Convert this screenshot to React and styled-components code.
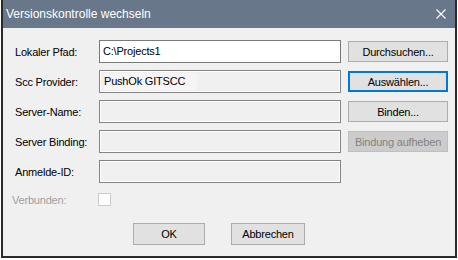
import React from "react";
import styled, { createGlobalStyle } from "styled-components";

const GlobalStyle = createGlobalStyle`
  html, body { margin: 0; padding: 0; background: #ffffff; }
  body { font-family: "Liberation Sans", Arial, sans-serif; }
  * { box-sizing: border-box; }
`;

const Window = styled.div`
  margin-left: 1px;
  width: 456px;
  height: 258px;
  border: 2px solid #2a2a2a;
  border-top: none;
  background: #f0f0f0;
  display: flex;
  flex-direction: column;
`;

const TitleBar = styled.div`
  height: 28px;
  flex: none;
  background: #687789;
  color: #ffffff;
  font-size: 12px;
  display: flex;
  align-items: center;
  justify-content: space-between;
  padding: 0 9px 1px 3px;
`;

const CloseIcon = styled.svg`
  width: 10px;
  height: 10px;
  display: block;
`;

const Body = styled.div`
  padding: 12px 7px 0 12px;
  display: flex;
  flex-direction: column;
  font-size: 11px;
  letter-spacing: -0.2px;
  color: #000;
`;

const Grid = styled.div`
  display: grid;
  grid-template-columns: 77px 242px 100px;
  grid-auto-rows: 23px;
  column-gap: 7px;
  row-gap: 7px;
  align-items: center;
`;

const Label = styled.div`
  grid-column: 1;
  color: ${(p) => (p.$disabled ? "#a0a0a0" : "#000")};
  white-space: nowrap;
`;

const Field = styled.div`
  grid-column: 2;
  height: 23px;
  display: flex;
  align-items: center;
  padding-left: ${(p) => (p.$editable ? "3px" : "4px")};
  border: 1px solid ${(p) => (p.$editable ? "#7a7a7a" : "#848484")};
  background: ${(p) => (p.$editable ? "#ffffff" : "#f0f0f0")};
  box-shadow: ${(p) => (p.$editable ? "none" : "inset 0 0 0 1px #ffffff")};
  white-space: nowrap;
`;

const FieldText = styled.span`
  background: ${(p) => (p.$tinted ? "#f7f4f7" : "transparent")};
  padding-right: ${(p) => (p.$tinted ? "12px" : "0")};
  line-height: 17px;
`;

const Button = styled.div`
  height: ${(p) => (p.$h || 21)}px;
  width: ${(p) => (p.$w ? `${p.$w}px` : "auto")};
  display: flex;
  align-items: center;
  justify-content: center;
  white-space: nowrap;
  background: ${(p) => (p.$disabled ? "#cccccc" : "#e1e1e1")};
  color: ${(p) => (p.$disabled ? "#838383" : "#000")};
  border: ${(p) =>
    p.$focused ? "2px solid #0078d7" : p.$disabled ? "1px solid #bfbfbf" : "1px solid #adadad"};
`;

const SideButton = styled(Button)`
  grid-column: 3;
`;

const CheckRow = styled.div`
  margin-top: 10px;
  height: 13px;
  display: flex;
  align-items: center;
`;

const CheckLabel = styled.div`
  width: 86px;
  margin-left: -3px;
  color: #a0a0a0;
`;

const CheckBox = styled.div`
  width: 13px;
  height: 13px;
  border: 1px solid #cccccc;
  background: #ffffff;
`;

const Footer = styled.div`
  margin-top: 17px;
  padding-left: 118px;
  display: flex;
  gap: 26px;
`;

export default function App() {
  return (
    <>
      <GlobalStyle />
      <Window>
        <TitleBar>
          <span>Versionskontrolle wechseln</span>
          <CloseIcon viewBox="0 0 10 10">
            <path d="M0.5 0.5 L9.5 9.5 M9.5 0.5 L0.5 9.5" stroke="#ffffff" strokeWidth="1.1" fill="none" />
          </CloseIcon>
        </TitleBar>
        <Body>
          <Grid>
            <Label>Lokaler Pfad:</Label>
            <Field $editable>
              <FieldText>C:\Projects1</FieldText>
            </Field>
            <SideButton>Durchsuchen...</SideButton>

            <Label>Scc Provider:</Label>
            <Field>
              <FieldText $tinted>PushOk GITSCC</FieldText>
            </Field>
            <SideButton $focused>Auswählen...</SideButton>

            <Label>Server-Name:</Label>
            <Field />
            <SideButton>Binden...</SideButton>

            <Label>Server Binding:</Label>
            <Field />
            <SideButton $disabled>Bindung aufheben</SideButton>

            <Label>Anmelde-ID:</Label>
            <Field />
          </Grid>
          <CheckRow>
            <CheckLabel>Verbunden:</CheckLabel>
            <CheckBox />
          </CheckRow>
          <Footer>
            <Button $w={72} $h={22}>OK</Button>
            <Button $w={74} $h={22}>Abbrechen</Button>
          </Footer>
        </Body>
      </Window>
    </>
  );
}
